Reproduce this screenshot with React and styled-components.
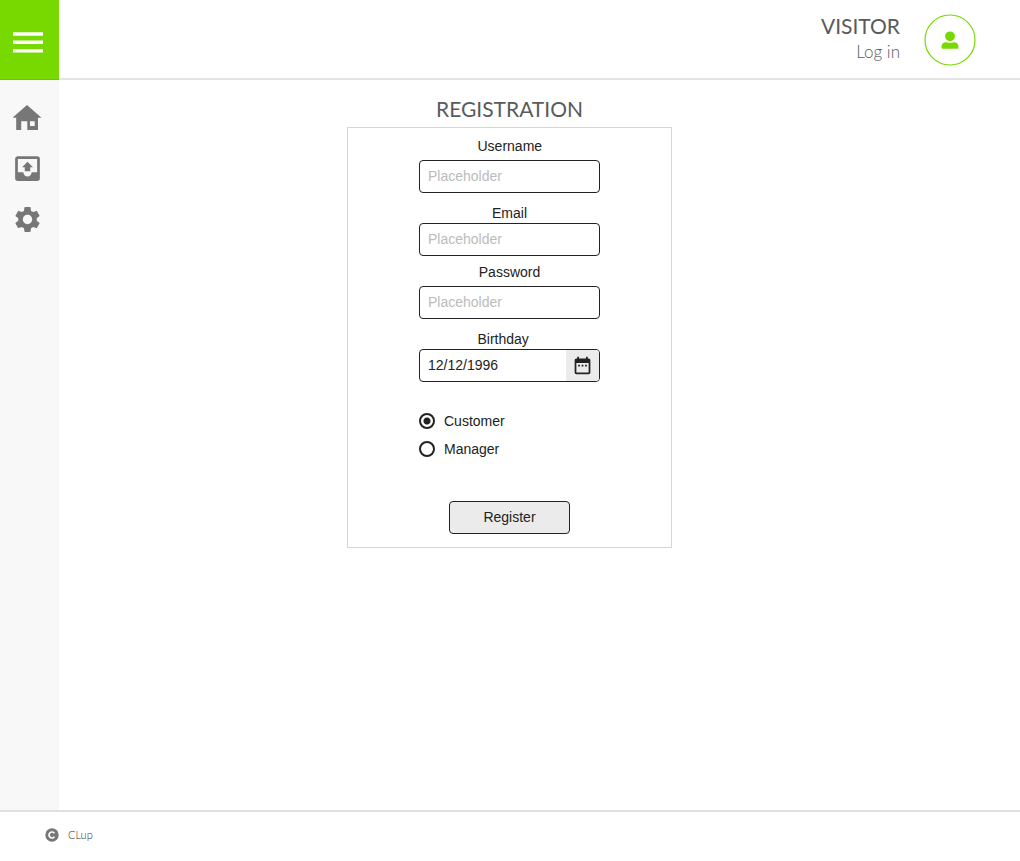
import React from "react";
import styled, { createGlobalStyle } from "styled-components";
import { MdSettings, MdDateRange } from "react-icons/md";

const GlobalStyle = createGlobalStyle`
  * { box-sizing: border-box; }
  body {
    margin: 0;
    background: #fff;
    color: #222;
    font-family: "Liberation Sans", Arial, sans-serif;
    font-size: 14px;
    line-height: 16px;
  }
`;

const Page = styled.div`
  display: flex;
  flex-direction: column;
  min-height: 100vh;
`;

const Header = styled.header`
  display: flex;
  height: 80px;
`;

const MenuButton = styled.button`
  display: flex;
  align-items: center;
  justify-content: center;
  width: 59px;
  padding: 5px 3px 0 0;
  border: 0;
  border-bottom: 1px solid #6fc30a;
  background: #78d900;
  cursor: pointer;
`;

const HeaderBar = styled.div`
  flex: 1;
  display: flex;
  justify-content: flex-end;
  align-items: center;
  gap: 24px;
  padding: 2px 44px 0 0;
  border-bottom: 2px solid #e4e4e4;
`;

const Account = styled.div`
  display: flex;
  flex-direction: column;
  align-items: flex-end;
  padding-bottom: 4px;
  font-family: Lato, sans-serif;
  color: #5a5a5a;
`;

const AccountRole = styled.span`
  font-size: 21px;
  line-height: 28px;
`;

const LoginLink = styled.a`
  font-size: 17px;
  line-height: 24px;
  font-weight: 300;
  color: inherit;
  text-decoration: none;
`;

const Avatar = styled.button`
  display: flex;
  align-items: center;
  justify-content: center;
  width: 52px;
  height: 52px;
  padding: 0;
  border: 0;
  border-radius: 50%;
  background: none;
  cursor: pointer;
`;

const Body = styled.div`
  flex: 1;
  display: flex;
`;

const Sidebar = styled.nav`
  display: flex;
  flex-direction: column;
  gap: 16px;
  width: 59px;
  padding: 20px 4px 0 0;
  background: #f8f8f8;
`;

const SidebarLink = styled.a`
  display: flex;
  align-items: center;
  justify-content: center;
  height: 35px;
  color: #777;
`;

const Main = styled.main`
  flex: 1;
  display: flex;
  flex-direction: column;
  align-items: center;
  padding: 15px 60px 16px 0;
`;

const Title = styled.h1`
  margin: 0 0 4px;
  font-family: Lato, sans-serif;
  font-size: 21px;
  line-height: 28px;
  font-weight: 400;
  color: #5a5a5a;
`;

const Card = styled.form`
  display: flex;
  flex-direction: column;
  align-items: center;
  width: 325px;
  padding: 10px 0 13px;
  border: 1px solid #d7d7d7;
`;

const Field = styled.div`
  display: flex;
  flex-direction: column;
  align-items: center;
  gap: ${(p) => (p.$tight ? 2 : 6)}px;
  margin-bottom: ${(p) => (p.$close ? 8 : 12)}px;
`;

const Label = styled.label`
  width: 64px;
  text-align: ${(p) => p.$align || "center"};
`;

const ControlFrame = styled.div`
  display: flex;
  width: 181px;
  height: 33px;
  overflow: hidden;
  border: 1px solid #222;
  border-radius: 4px;
  background: #fff;
`;

const TextInput = styled.input`
  flex: 1;
  min-width: 0;
  padding: 0 8px 2px;
  border: 0;
  outline: 0;
  background: none;
  color: #222;
  font: inherit;
  &::placeholder {
    color: #bbb;
    opacity: 1;
  }
`;

const CalendarButton = styled.button`
  display: flex;
  align-items: center;
  justify-content: center;
  width: 33px;
  padding: 0 1px 0 0;
  border: 0;
  background: #ebebeb;
  color: #222;
  cursor: pointer;
`;

const RoleGroup = styled.div`
  display: flex;
  flex-direction: column;
  gap: 12px;
  width: 181px;
  margin: 19px 0 44px;
`;

const RoleOption = styled.label`
  display: flex;
  align-items: center;
  gap: 9px;
`;

const Radio = styled.input`
  appearance: none;
  width: 16px;
  height: 16px;
  margin: 0;
  border: 2px solid #222;
  border-radius: 50%;
  background: #fff;
  &:checked {
    background: radial-gradient(circle, #222 3px, #fff 4px);
  }
`;

const SubmitButton = styled.button`
  width: 121px;
  height: 33px;
  padding: 0 0 2px;
  border: 1px solid #222;
  border-radius: 4px;
  background: #ebebeb;
  color: #222;
  font: inherit;
  cursor: pointer;
`;

const Footer = styled.footer`
  display: flex;
  align-items: center;
  gap: 9px;
  height: 51px;
  padding: 0 45px 4px;
  border-top: 2px solid #e0e0e0;
  font-family: Lato, sans-serif;
  font-size: 11px;
  font-weight: 300;
  color: #333;
`;

const MenuIcon = () => (
  <svg width="30" height="21" viewBox="0 0 30 21" fill="#fff" aria-hidden="true">
    <path d="M0 .3h30v3.4H0zM0 8.6h30V12H0zM0 17.2h30v3.4H0z" />
  </svg>
);

const UserIcon = () => (
  <svg width="52" height="52" viewBox="0 0 52 52" aria-hidden="true">
    <circle cx="26" cy="26" r="25" fill="none" stroke="#78d900" strokeWidth="1.2" />
    <circle cx="26" cy="22.3" r="4.9" fill="#78d900" />
    <path
      d="M17.5 33.2c0-3.4 1.7-5 4.600-5 2.6.8 5.2.8 7.800 0 2.900 0 4.600 1.600 4.600 5 0 1-.5 1.500-1.500 1.500H19c-1 0-1.500-.5-1.500-1.500z"
      fill="#78d900"
    />
  </svg>
);

const HomeIcon = () => (
  <svg width="29" height="25" viewBox="0 0 29 25" fill="currentColor" aria-hidden="true">
    <path
      fillRule="evenodd"
      d="M14 0 28.500 12.800H25V25H14.300V16.300H8.200V25H3.200V12.800H-.5zM17 16.300V21H21.700V16.300z"
    />
  </svg>
);

const OutboxIcon = () => (
  <svg width="33" height="33" viewBox="0 0 24 24" fill="currentColor" aria-hidden="true">
    <path d="M14 14H10V11H8L12 7L16 11H14V14M19 14.800H15A3 3 0 0 1 9 14.800H5V5H19M19 3H5C3.900 3 3 3.900 3 5V19A2 2 0 0 0 5 21H19A2 2 0 0 0 21 19V5A2 2 0 0 0 19 3Z" />
  </svg>
);

const CopyrightIcon = () => (
  <svg width="14" height="14" viewBox="0 0 14 14" aria-hidden="true">
    <circle cx="7" cy="7" r="6.700" fill="#777" />
    <path d="M9.400 5.200A3 3 0 1 0 9.400 8.800" fill="none" stroke="#fff" strokeWidth="1.700" />
  </svg>
);

export default function App() {
  return (
    <Page>
      <GlobalStyle />
      <Header>
        <MenuButton type="button" aria-label="Menu">
          <MenuIcon />
        </MenuButton>
        <HeaderBar>
          <Account>
            <AccountRole>VISITOR</AccountRole>
            <LoginLink href="#login">Log in</LoginLink>
          </Account>
          <Avatar type="button" aria-label="Account">
            <UserIcon />
          </Avatar>
        </HeaderBar>
      </Header>
      <Body>
        <Sidebar aria-label="Main">
          <SidebarLink href="#home" aria-label="Home">
            <HomeIcon />
          </SidebarLink>
          <SidebarLink href="#outbox" aria-label="Outbox">
            <OutboxIcon />
          </SidebarLink>
          <SidebarLink href="#settings" aria-label="Settings">
            <MdSettings size={31} />
          </SidebarLink>
        </Sidebar>
        <Main>
          <Title>REGISTRATION</Title>
          <Card onSubmit={(e) => e.preventDefault()}>
            <Field>
              <Label htmlFor="username">Username</Label>
              <ControlFrame>
                <TextInput id="username" type="text" placeholder="Placeholder" />
              </ControlFrame>
            </Field>
            <Field $tight $close>
              <Label htmlFor="email">Email</Label>
              <ControlFrame>
                <TextInput id="email" type="email" placeholder="Placeholder" />
              </ControlFrame>
            </Field>
            <Field>
              <Label htmlFor="password">Password</Label>
              <ControlFrame>
                <TextInput id="password" type="password" placeholder="Placeholder" />
              </ControlFrame>
            </Field>
            <Field $tight>
              <Label htmlFor="birthday" $align="left">Birthday</Label>
              <ControlFrame>
                <TextInput id="birthday" type="text" defaultValue="12/12/1996" />
                <CalendarButton type="button" aria-label="Choose date">
                  <MdDateRange size={21} />
                </CalendarButton>
              </ControlFrame>
            </Field>
            <RoleGroup role="radiogroup" aria-label="Account type">
              <RoleOption>
                <Radio type="radio" name="role" value="customer" defaultChecked />
                Customer
              </RoleOption>
              <RoleOption>
                <Radio type="radio" name="role" value="manager" />
                Manager
              </RoleOption>
            </RoleGroup>
            <SubmitButton type="submit">Register</SubmitButton>
          </Card>
        </Main>
      </Body>
      <Footer>
        <CopyrightIcon />
        <span>CLup</span>
      </Footer>
    </Page>
  );
}
